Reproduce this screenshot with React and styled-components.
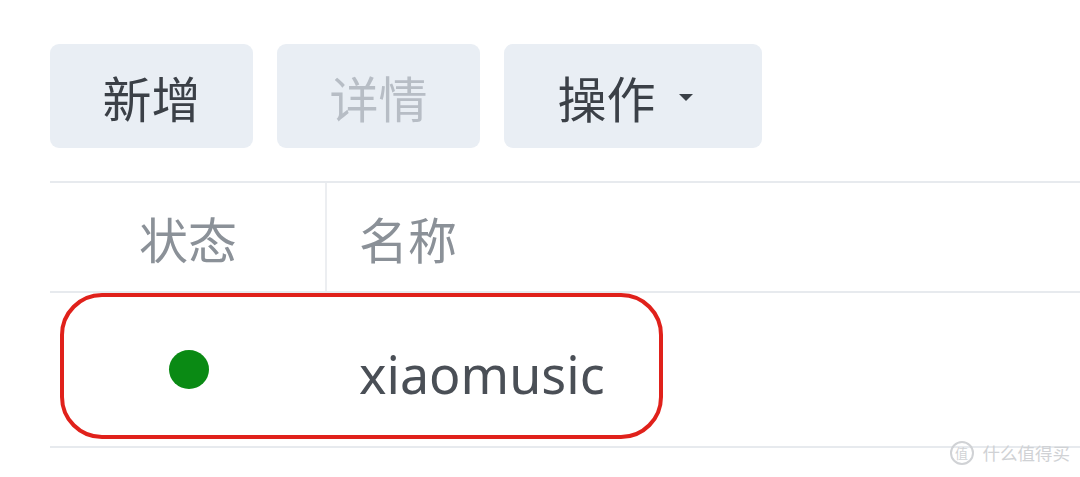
import React from 'react';
import styled, { createGlobalStyle } from 'styled-components';

const GlobalStyle = createGlobalStyle`
    html, body {
        margin: 0;
        padding: 0;
        background: #ffffff;
    }
    body {
        font-family: "Noto Sans", "Noto Sans CJK SC", sans-serif;
    }
`;

const Page = styled.div`
    position: relative;
    width: 1080px;
    height: 477px;
    overflow: hidden;
    padding: 44px 0 0 50px;
    box-sizing: border-box;
`;

const Toolbar = styled.div`
    display: flex;
    gap: 24px;
`;

const Button = styled.div`
    display: flex;
    align-items: center;
    justify-content: center;
    gap: 23px;
    width: ${p => p.w}px;
    height: 104px;
    box-sizing: border-box;
    padding-right: ${p => (p.menu ? 16 : 0)}px;
    border-radius: 9px;
    background: #e9eef4;
    color: ${p => (p.disabled ? '#b7bdc5' : '#3b4047')};
    font-family: "Noto Sans CJK SC", sans-serif;
    font-size: 49px;
    line-height: 1;
`;

const Caret = styled.span`
    width: 0;
    height: 0;
    border-left: 7.5px solid transparent;
    border-right: 7.5px solid transparent;
    border-top: 7px solid #3b4047;
    margin-top: 2px;
`;

const Table = styled.div`
    margin-top: 33px;
    border-top: 2px solid #e7eaee;
`;

const HeadRow = styled.div`
    display: flex;
    height: 108px;
    border-bottom: 2px solid #e7eaee;
    color: #8b9198;
    font-family: "Noto Sans CJK SC", sans-serif;
    font-size: 49px;
`;

const StatusCell = styled.div`
    width: 274px;
    display: flex;
    align-items: center;
    justify-content: center;
    border-right: ${p => (p.head ? '2px solid #eceef1' : 'none')};
    padding-left: 1px;
`;

const NameCell = styled.div`
    flex: 1;
    display: flex;
    align-items: center;
    padding-left: ${p => (p.head ? 32 : 34)}px;
    padding-top: ${p => (p.head ? 0 : 8)}px;
`;

const DataRow = styled.div`
    position: relative;
    display: flex;
    height: 153px;
    border-bottom: 2px solid #e7eaee;
    color: #4a4f56;
    font-size: 52px;
`;

const Dot = styled.span`
    width: 40px;
    height: 39px;
    border-radius: 50%;
    background: #0a8a14;
    margin-left: 1px;
`;

const Highlight = styled.div`
    position: absolute;
    left: 10px;
    top: 0;
    width: 603px;
    height: 146px;
    box-sizing: border-box;
    border: 4px solid #e0211b;
    border-radius: 42px;
    pointer-events: none;
`;

const Watermark = styled.div`
    position: absolute;
    right: 10px;
    bottom: 12px;
    display: flex;
    align-items: center;
    gap: 9px;
    color: #d0d2d5;
    font-family: "Noto Sans CJK SC", sans-serif;
    font-size: 17.5px;
`;

const Badge = styled.span`
    width: 20px;
    height: 20px;
    border: 2px solid #d0d2d5;
    border-radius: 50%;
    display: flex;
    align-items: center;
    justify-content: center;
    font-size: 13px;
`;

function App() {
    return (
        <Page>
            <GlobalStyle />
            <Toolbar>
                <Button w={203}>新增</Button>
                <Button w={203} disabled>详情</Button>
                <Button w={258} menu>
                    操作
                    <Caret />
                </Button>
            </Toolbar>
            <Table>
                <HeadRow>
                    <StatusCell head>状态</StatusCell>
                    <NameCell head>名称</NameCell>
                </HeadRow>
                <DataRow>
                    <StatusCell>
                        <Dot />
                    </StatusCell>
                    <NameCell>xiaomusic</NameCell>
                    <Highlight />
                </DataRow>
            </Table>
            <Watermark>
                <Badge>值</Badge>
                什么值得买
            </Watermark>
        </Page>
    );
}

export default App;
